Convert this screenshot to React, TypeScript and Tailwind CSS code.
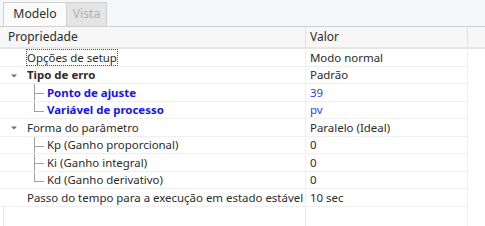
import React from 'react';

type Row = {
  label: string;
  value: string;
  kind: 'top' | 'parent' | 'child';
  bold?: boolean;
  blue?: boolean;
  last?: boolean;
  focus?: boolean;
};

const rows: Row[] = [
  { label: 'Opções de setup', value: 'Modo normal', kind: 'top', focus: true },
  { label: 'Tipo de erro', value: 'Padrão', kind: 'parent', bold: true },
  { label: 'Ponto de ajuste', value: '39', kind: 'child', bold: true, blue: true },
  { label: 'Variável de processo', value: 'pv', kind: 'child', bold: true, blue: true, last: true },
  { label: 'Forma do parâmetro', value: 'Paralelo (Ideal)', kind: 'parent' },
  { label: 'Kp (Ganho proporcional)', value: '0', kind: 'child' },
  { label: 'Ki (Ganho integral)', value: '0', kind: 'child' },
  { label: 'Kd (Ganho derivativo)', value: '0', kind: 'child', last: true },
  { label: 'Passo do tempo para a execução em estado estável', value: '10 sec', kind: 'top' },
];

const Caret = () => (
  <svg width="8" height="6" viewBox="0 0 8 6" className="absolute left-[10px] top-[6px]">
    <path d="M1 1.5 L7 1.5 L4 4.5 Z" fill="#707070" />
  </svg>
);

const TreeLine = ({ last }: { last?: boolean }) => (
  <>
    {/* vertical connector */}
    <div
      className={`absolute left-[34px] top-0 w-px bg-[#a0a0a0] ${last ? 'h-[9px]' : 'h-full'}`}
    />
    {/* horizontal connector */}
    <div className="absolute left-[34px] top-[9px] w-[10px] h-px bg-[#a0a0a0]" />
  </>
);

export default function App() {
  return (
    <div
      className="w-[485px] h-[226px] bg-white overflow-hidden text-[11.45px] text-[#2b2b2b] flex flex-col"
      style={{ fontFamily: '"Noto Sans", "Open Sans", sans-serif' }}
    >
      {/* Tabs */}
      <div className="h-[27px] shrink-0 bg-[#f3f7f9] flex items-end pl-[3px] border-b border-[#d0d0d0] text-[12.2px]">
        <div className="h-[24px] w-[64px] flex items-center justify-center bg-[#fbfbfb] border border-b-0 border-[#d0d0d0] text-[#2b2b2b]">
          Modelo
        </div>
        <div className="h-[24px] w-[40px] flex items-center justify-center bg-[#e4e4e4] border border-l-0 border-b-0 border-[#d0d0d0] text-[#b0b0b0]">
          Vista
        </div>
      </div>

      {/* Header */}
      <div className="h-[22px] shrink-0 flex bg-[#f7f7f7] border-b-2 border-[#e6e6e6] text-[12px]">
        <div className="w-[306px] pl-[8px] flex items-center border-r border-[#e0e0e0]">Propriedade</div>
        <div className="w-[162px] pl-[4px] flex items-center border-r border-[#e0e0e0]">Valor</div>
        <div className="flex-1" />
      </div>

      {/* Rows */}
      <div className="flex flex-col">
        {rows.map((r, i) => (
          <div key={i} className="h-[17.5px] flex">
            <div className="relative w-[306px] border-r border-b border-[#efefef] flex items-center">
              {r.kind === 'parent' && <Caret />}
              {r.kind === 'child' && <TreeLine last={r.last} />}
              <span
                className={`whitespace-nowrap leading-none ${r.kind === 'child' ? 'pl-[47px]' : 'pl-[27px]'} ${
                  r.bold ? 'font-bold' : ''
                } ${r.blue ? 'text-[#1414f0]' : ''}`}
              >
                <span className={r.focus ? 'outline outline-1 outline-dotted outline-[#555] outline-offset-0' : ''}>
                  {r.label}
                </span>
              </span>
            </div>
            <div
              className={`w-[162px] pl-[4px] border-r border-b border-[#efefef] flex items-center whitespace-nowrap ${
                r.blue ? 'text-[#3a3aff]' : ''
              }`}
            >
              {r.value}
            </div>
            <div className="flex-1" />
          </div>
        ))}
      </div>

      {/* Empty area */}
      <div className="flex-1 flex">
        <div className="w-[306px] flex">
          <div className="ml-[3px] w-full border-l border-r border-[#e8e8e8]" />
        </div>
        <div className="w-[162px] border-r border-[#efefef]" />
        <div className="flex-1" />
      </div>
    </div>
  );
}
